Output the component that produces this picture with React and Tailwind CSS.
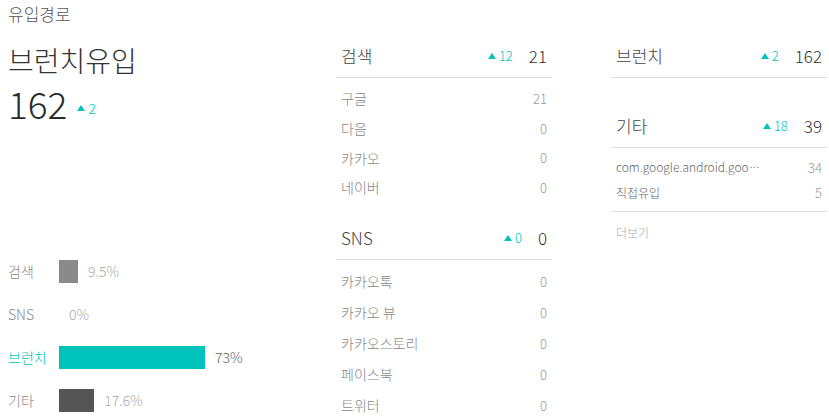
import React from 'react'

const bars = [
    { label: '검색', pct: 9.5, text: '9.5%', color: 'bg-[#8a8a8a]', labelCls: 'text-[#8a8a8a]', pctCls: 'text-[#aaaaaa]' },
    { label: 'SNS', pct: 0, text: '0%', color: 'bg-[#8a8a8a]', labelCls: 'text-[#8a8a8a]', pctCls: 'text-[#aaaaaa]' },
    { label: '브런치', pct: 73, text: '73%', color: 'bg-[#00c4bb]', labelCls: 'text-[#00c4bb]', pctCls: 'text-[#666666]' },
    { label: '기타', pct: 17.6, text: '17.6%', color: 'bg-[#555555]', labelCls: 'text-[#8a8a8a]', pctCls: 'text-[#aaaaaa]' },
]

const search = [['구글', 21], ['다음', 0], ['카카오', 0], ['네이버', 0]]
const sns = [['카카오톡', 0], ['카카오 뷰', 0], ['카카오스토리', 0], ['페이스북', 0], ['트위터', 0]]

function Up({ n, cls = 'text-[13px]' }) {
    return (
        <span className={`flex items-center gap-[3px] text-[#00c4bb] ${cls}`}>
            <span className="w-0 h-0 border-l-[4px] border-r-[4px] border-b-[6px] border-l-transparent border-r-transparent border-b-[#00c4bb]"></span>
            {n}
        </span>
    )
}

function Header({ title, up, total }) {
    return (
        <div className="h-[43px] flex items-center justify-between px-[5px] border-b border-[#dddddd]">
            <span className="text-[17px] text-[#444444]">{title}</span>
            <div className="flex items-center gap-[16px]">
                <Up n={up} />
                <span className="text-[17px] text-[#333333]">{total}</span>
            </div>
        </div>
    )
}

export default function App() {
    return (
        <div className="w-[829px] h-[420px] overflow-hidden bg-white font-['Noto_Sans_CJK_KR','Noto_Sans',sans-serif] font-light">
            <div className="h-[35px] pl-[8px] pt-[3px] text-[17px] leading-[22px] text-[#555555]">유입경로</div>
            <div className="flex">
                {/* left */}
                <div className="w-[336px] pl-[8px]">
                    <div className="text-[28px] leading-[40px] text-[#333333] mt-[5px]">브런치유입</div>
                    <div className="flex items-center mt-[1px]">
                        <span className="text-[37px] leading-[44px] text-[#2a2a2a]">162</span>
                        <span className="ml-[10px] mt-[10px]"><Up n={2} cls="text-[14px]" /></span>
                    </div>
                    <div className="mt-[125px] flex flex-col">
                        {bars.map((b) => (
                            <div key={b.label} className="h-[43px] flex items-center">
                                <span className={`w-[51px] text-[14px] ${b.labelCls}`}>{b.label}</span>
                                {b.pct > 0 && <div className={`h-[23px] ${b.color}`} style={{ width: b.pct * 2 + 'px' }}></div>}
                                <span className={`ml-[10px] text-[14px] ${b.pctCls}`}>{b.text}</span>
                            </div>
                        ))}
                    </div>
                </div>
                {/* middle */}
                <div className="w-[216px]">
                    <Header title="검색" up={12} total={21} />
                    <div className="pt-[6px]">
                        {search.map(([k, v]) => (
                            <div key={k} className="h-[29.7px] flex items-center justify-between px-[5px]">
                                <span className="text-[14px] text-[#888888]">{k}</span>
                                <span className="text-[13px] text-[#999999]">{v}</span>
                            </div>
                        ))}
                    </div>
                    <div className="mt-[14px]">
                        <Header title="SNS" up={0} total={0} />
                    </div>
                    <div className="pt-[6px]">
                        {sns.map(([k, v]) => (
                            <div key={k} className="h-[31px] flex items-center justify-between px-[5px]">
                                <span className="text-[14px] text-[#888888]">{k}</span>
                                <span className="text-[13px] text-[#999999]">{v}</span>
                            </div>
                        ))}
                    </div>
                </div>
                {/* right */}
                <div className="w-[216px] ml-[59px]">
                    <Header title="브런치" up={2} total={162} />
                    <div className="mt-[27px]">
                        <Header title="기타" up={18} total={39} />
                    </div>
                    <div className="pt-[7px] pb-[6px] border-b border-[#dddddd]">
                        <div className="h-[25px] flex items-center justify-between px-[5px]">
                            <span className="text-[12px] text-[#666666]">com.google.android.goo<span className="font-['DejaVu_Sans'] text-[11px] text-[#888888]">⋯</span></span>
                            <span className="text-[13px] text-[#999999]">34</span>
                        </div>
                        <div className="h-[25px] flex items-center justify-between px-[5px]">
                            <span className="text-[12px] text-[#666666]">직접유입</span>
                            <span className="text-[13px] text-[#999999]">5</span>
                        </div>
                    </div>
                    <div className="pt-[12px] px-[5px] text-[12px] leading-[18px] text-[#aaaaaa]">더보기</div>
                </div>
            </div>
        </div>
    )
}
